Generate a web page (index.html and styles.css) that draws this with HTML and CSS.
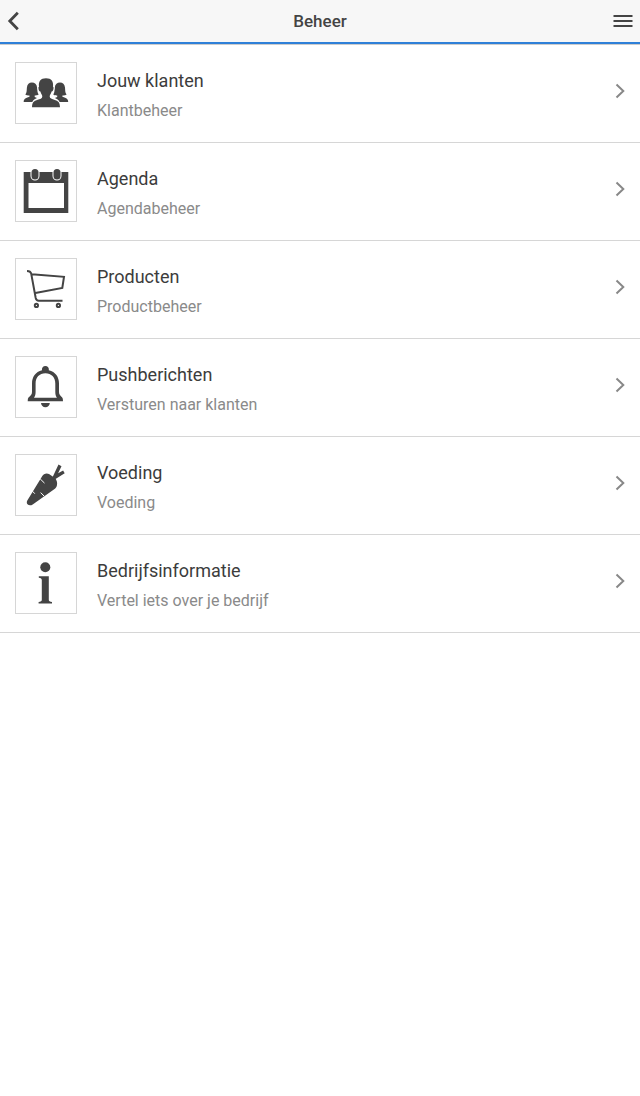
FILE: index.html
```html
<!DOCTYPE html>
<html lang="nl">
<head>
<meta charset="utf-8">
<meta name="viewport" content="width=device-width, initial-scale=1">
<title>Beheer</title>
<link rel="stylesheet" href="styles.css">
</head>
<body>
<header class="topbar">
  <button class="topbar-button" type="button" aria-label="Terug">
    <svg width="12" height="20" viewBox="0 0 12 20"><path d="M10.800 1.800 2.800 10l8 8.200" fill="none" stroke="currentColor" stroke-width="2.800"/></svg>
  </button>
  <h1 class="topbar-title">Beheer</h1>
  <button class="topbar-button topbar-menu" type="button" aria-label="Menu">
    <svg width="20" height="14" viewBox="0 0 20 14"><path d="M.5 2h19M.5 7h19M.5 12h19" fill="none" stroke="currentColor" stroke-width="2"/></svg>
  </button>
</header>
<main>
  <ul class="menu">
    <li><a class="row" href="#klanten">
      <span class="thumb"><svg viewBox="0 0 60 60">
        <path d="M7.700 39c0-3 1.500-3.700 5.800-5.200v-1.300c-1.700.2-3.200-.2-4.200-.9 1.700-2.300 1.300-4.600 1.600-7.200.4-3.200 2.200-4.800 5-4.800s4.900 1.600 5.200 4.800c.3 2.600.1 5 1.600 7.200-.9.600-2.200 1-4 .9v1.400l2.300 1.100c-2 .8-3.800 1.700-4.600 4z"/>
        <path d="M52.200 39c0-3-1.500-3.700-5.800-5.200v-1.300c1.700.2 3.200-.2 4.200-.9-1.700-2.300-1.300-4.600-1.600-7.200-.4-3.200-2.200-4.800-5-4.800s-4.900 1.600-5.200 4.800c-.3 2.600-.1 5-1.600 7.200.9.600 2.200 1 4 .9v1.400l-2.300 1.100c2 .8 3.800 1.700 4.600 4z"/>
        <path class="halo" d="M16 44.200c.1-5 2-6.200 5-7.200 3.300-1 5.300-1.500 5.300-3.500 0-1.800-1.400-2.500-1.900-5-1.300-.4-1.800-1.800-1.900-3.100-.1-1 0-1.500.5-1.700-.7-5.300 1.500-8.500 7-8.500s7.700 3.200 7 8.500c.5.200.6.700.5 1.700-.1 1.300-.6 2.700-1.900 3.100-.5 2.500-1.900 3.200-1.900 5s2 2.500 5.300 3.500c3 1 4.900 2.200 5 7.200z"/>
      </svg></span>
      <span class="text"><span class="title">Jouw klanten</span><span class="subtitle">Klantbeheer</span></span>
      <svg class="chevron" viewBox="0 0 10 16"><path d="m1.500 1.500 6.800 6.500-6.800 6.500"/></svg>
    </a></li>
    <li><a class="row" href="#agenda">
      <span class="thumb"><svg viewBox="0 0 60 60">
        <path fill-rule="evenodd" d="M7.700 11h44.600v41H7.700zM12.500 22v25H48V22z"/>
        <rect class="halo" x="15.500" y="8" width="7" height="10.500" rx="3.500"/>
        <rect class="halo" x="37.500" y="8" width="7" height="10.500" rx="3.500"/>
      </svg></span>
      <span class="text"><span class="title">Agenda</span><span class="subtitle">Agendabeheer</span></span>
      <svg class="chevron" viewBox="0 0 10 16"><path d="m1.500 1.500 6.800 6.500-6.800 6.500"/></svg>
    </a></li>
    <li><a class="row" href="#producten">
      <span class="thumb"><svg viewBox="0 0 60 60">
        <path class="line" d="M11 12q3.500 0 4.200 2.600l4.500 24.400q.6 2.700 3 2.700h23.800M15.800 15.200 48 17.800l-1.700 11.200L19.400 34.100"/>
        <circle class="line" cx="20.400" cy="46.400" r="1.600"/><circle class="line" cx="42.400" cy="46.400" r="1.600"/>
      </svg></span>
      <span class="text"><span class="title">Producten</span><span class="subtitle">Productbeheer</span></span>
      <svg class="chevron" viewBox="0 0 10 16"><path d="m1.500 1.500 6.800 6.500-6.800 6.500"/></svg>
    </a></li>
    <li><a class="row" href="#pushberichten">
      <span class="thumb"><svg viewBox="0 0 60 60">
        <path fill-rule="evenodd" d="M26 13.300a3.500 3.500 0 1 1 6.800 0C39.500 15 43 20 43 26.500V35c0 2.500 1.500 3.800 3.200 5.500q.8.800.8 3.800H11.700q0-3 .8-3.800C14.500 38.800 16 37.500 16 35v-8.500C16 20 19.500 15 26 13.300zM29.400 16.300c-6 0-9.800 4.200-9.800 10.200V35c0 2.500-.5 4-1.600 5.700h22.900c-1.100-1.700-1.600-3.200-1.600-5.700v-8.500c0-6-3.900-10.200-9.900-10.200z"/>
        <path d="M25 46h8.800c-.2 2.600-2 4.200-4.400 4.200S25.200 48.600 25 46z"/>
      </svg></span>
      <span class="text"><span class="title">Pushberichten</span><span class="subtitle">Versturen naar klanten</span></span>
      <svg class="chevron" viewBox="0 0 10 16"><path d="m1.500 1.500 6.800 6.500-6.800 6.500"/></svg>
    </a></li>
    <li><a class="row" href="#voeding">
      <span class="thumb"><svg viewBox="0 0 60 60">
        <path d="M26 21.500c1.300-2.600 4.500-3.900 7-2.500l5.500 3.700c2.300 1.800 3 4.800 2.500 7.300-.4 2.200-1.300 3.200-2.800 4.300L16.700 49.500c-1.800 1.200-4 1.100-5.200-.2-.9-1-.9-2.400-.2-3.800z"/>
        <path d="M36.300 22.800 42.500 9.600l3 1.700-3.400 6.900 5-2.700 1.600 2.700-10 6.300z"/>
        <path class="cut" d="m24.200 23.900 4.300 4.200M16.500 36.200l2.300 2.500M28 41l-3.300-3.400"/>
      </svg></span>
      <span class="text"><span class="title">Voeding</span><span class="subtitle">Voeding</span></span>
      <svg class="chevron" viewBox="0 0 10 16"><path d="m1.500 1.500 6.800 6.500-6.800 6.500"/></svg>
    </a></li>
    <li><a class="row" href="#bedrijfsinformatie">
      <span class="thumb"><svg viewBox="0 0 60 60">
        <circle cx="29.300" cy="14.300" r="5"/>
        <path d="M22.800 23.300h10v23.500q0 2 3.200 2.200v1.400H22.600V49q3.200-.2 3.200-2.200V27q0-2-3-2.300z"/>
      </svg></span>
      <span class="text"><span class="title">Bedrijfsinformatie</span><span class="subtitle">Vertel iets over je bedrijf</span></span>
      <svg class="chevron" viewBox="0 0 10 16"><path d="m1.500 1.500 6.800 6.500-6.800 6.500"/></svg>
    </a></li>
  </ul>
</main>
</body>
</html>
```
FILE: styles.css
```css
* {
  box-sizing: border-box;
}

body {
  margin: 0;
  background: #fff;
  color: #444;
  font-family: Roboto, "Liberation Sans", sans-serif;
}

.topbar {
  display: grid;
  grid-template-columns: 1fr auto 1fr;
  align-items: center;
  height: 45px;
  padding: 0 7px 2px;
  background: #f7f7f7;
  border-bottom: 1px solid #ccc;
  box-shadow: inset 0 -2px #2f80d8;
}

.topbar-button {
  display: flex;
  justify-self: start;
  padding: 0;
  border: 0;
  background: none;
  color: #444;
}

.topbar-menu {
  justify-self: end;
}

.topbar-title {
  margin: 0;
  font-size: 17px;
  line-height: 20px;
  font-weight: 500;
}

.menu {
  margin: 0;
  padding: 0;
  list-style: none;
}

.row {
  display: flex;
  align-items: center;
  gap: 20px;
  padding: 17px 15px 18px;
  border-bottom: 1px solid #d6d6d6;
  color: #444;
  text-decoration: none;
}

.thumb {
  flex: none;
  width: 62px;
  height: 62px;
  border: 1px solid #d6d6d6;
}

.thumb svg {
  display: block;
  fill: #444;
}

.thumb .halo {
  stroke: #fff;
  stroke-width: 2;
  paint-order: stroke;
}

.thumb .line {
  fill: none;
  stroke: #444;
  stroke-width: 2;
}

.thumb .cut {
  fill: none;
  stroke: #fff;
  stroke-width: 1;
}

.text {
  display: flex;
  flex: 1;
  flex-direction: column;
  gap: 6px;
  padding-top: 5px;
}

.title {
  color: #3c3c3c;
  font-size: 18px;
  line-height: 24px;
}

.subtitle {
  color: #8a8a8a;
  font-size: 16px;
  line-height: 24px;
}

.chevron {
  flex: none;
  width: 10px;
  height: 16px;
  margin-bottom: 4px;
  fill: none;
  stroke: #888;
  stroke-width: 2;
}
```
